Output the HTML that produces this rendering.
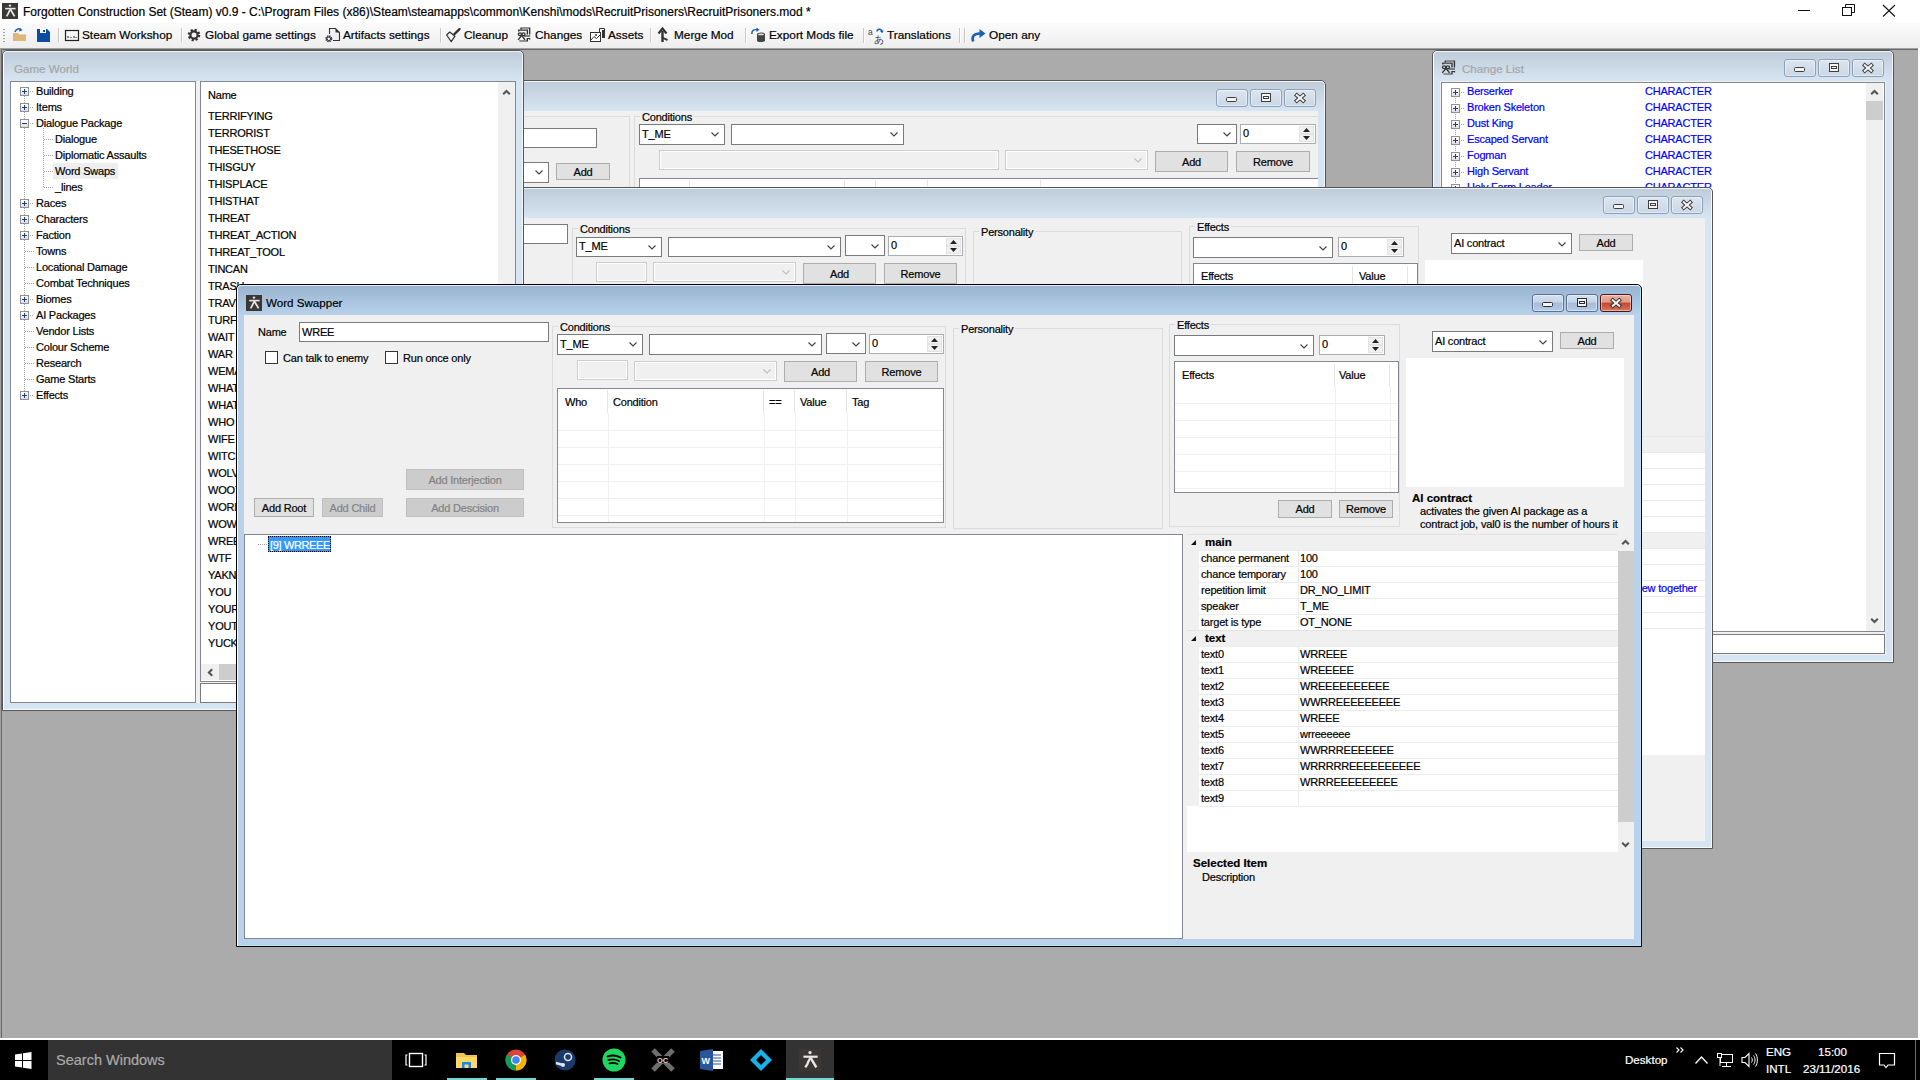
<!DOCTYPE html>
<html><head><meta charset="utf-8"><title>Forgotten Construction Set</title>
<style>
html,body{margin:0;padding:0;}
body{width:1920px;height:1080px;overflow:hidden;position:relative;background:#ababab;font-family:"Liberation Sans",sans-serif;font-size:11px;color:#000;}
.a{position:absolute;box-sizing:border-box;}
.t{position:absolute;white-space:nowrap;-webkit-text-stroke:0.2px currentColor;}
svg.a{overflow:visible;}
</style></head><body>
<div class="a" style="left:0px;top:0px;width:1920px;height:23px;background:#fff;"></div>
<div class="a" style="left:2px;top:3px;width:16px;height:16px;background:#3b3735;"></div>
<svg class="a" style="left:2px;top:3px;" width="16" height="16" viewBox="0 0 16 16"><circle cx="8" cy="2.6" r="1.2" fill="#e6e6e6"/><path d="M3.2,5.6 H13.6" stroke="#e6e6e6" stroke-width="1.6"/><path d="M8.2,6 L12.6,13.4" stroke="#e6e6e6" stroke-width="1.8"/><path d="M8.2,6.5 C7.4,8.5 6.6,9 6.2,10.8 L4.6,13.4" stroke="#e6e6e6" stroke-width="1.7" fill="none"/></svg>
<div class="t" style="left:23px;top:2.5px;line-height:18px;font-size:12px;">Forgotten Construction Set (Steam) v0.9 - C:\Program Files (x86)\Steam\steamapps\common\Kenshi\mods\RecruitPrisoners\RecruitPrisoners.mod *</div>
<div class="a" style="left:1798px;top:10px;width:12px;height:1px;background:#111;"></div>
<svg class="a" style="left:1842px;top:4px;" width="14" height="12" viewBox="0 0 14 12"><rect x="0.5" y="3.5" width="9" height="8" fill="none" stroke="#111"/><path d="M3.5,3.5 V0.5 H12.5 V8.5 H9.5" fill="none" stroke="#111"/></svg>
<svg class="a" style="left:1882px;top:4px;" width="14" height="13" viewBox="0 0 14 13"><path d="M1,1 L13,12.5 M13,1 L1,12.5" stroke="#111" stroke-width="1.1"/></svg>
<div class="a" style="left:0px;top:23px;width:1920px;height:25px;background:linear-gradient(#fbfbfb,#eeeeee);"></div>
<div class="a" style="left:3px;top:29px;width:2px;height:1px;background:#a0a0a0;"></div>
<div class="a" style="left:3px;top:32px;width:2px;height:1px;background:#a0a0a0;"></div>
<div class="a" style="left:3px;top:35px;width:2px;height:1px;background:#a0a0a0;"></div>
<div class="a" style="left:3px;top:38px;width:2px;height:1px;background:#a0a0a0;"></div>
<div class="a" style="left:3px;top:41px;width:2px;height:1px;background:#a0a0a0;"></div>
<svg class="a" style="left:12px;top:27px;" width="16" height="15" viewBox="0 0 16 15"><path d="M1,6 H6 L7,7.5 H14 V14 H1 Z" fill="#dcb67a"/><path d="M3,5 C4,1.5 8,1 9,3" stroke="#1a5fb4" stroke-width="1.5" fill="none"/><path d="M8,1 L10.5,3.5 L7,4.5 Z" fill="#1a5fb4"/></svg>
<svg class="a" style="left:37px;top:29px;" width="13" height="13" viewBox="0 0 13 13"><path d="M0,0 H10 L13,3 V13 H0 Z" fill="#0a4da3"/><rect x="3" y="0" width="6" height="4" fill="#fff"/><rect x="6" y="1" width="2" height="2" fill="#0a4da3"/></svg>
<div class="a" style="left:58px;top:28px;width:1px;height:15px;background:#c8c8c8;"></div>
<div class="a" style="left:59px;top:28px;width:1px;height:15px;background:#fff;"></div>
<svg class="a" style="left:65px;top:30px;" width="14" height="11" viewBox="0 0 14 11"><rect x="0.5" y="0.5" width="13" height="10" fill="none" stroke="#222" stroke-width="1.2"/><path d="M3,8 V6 M6,8 V7 M9,8 V6 M11,8 V7" stroke="#222"/></svg>
<div class="t" style="left:82px;top:26.0px;line-height:18px;font-size:11.8px;">Steam Workshop</div>
<div class="a" style="left:181px;top:28px;width:1px;height:15px;background:#c8c8c8;"></div>
<div class="a" style="left:182px;top:28px;width:1px;height:15px;background:#fff;"></div>
<svg class="a" style="left:187px;top:28px;" width="14" height="14" viewBox="0 0 14 14"><circle cx="7" cy="7" r="4.8" fill="none" stroke="#333" stroke-width="3" stroke-dasharray="2 1.77"/><circle cx="7" cy="7" r="3.6" fill="none" stroke="#333" stroke-width="2.2"/></svg>
<div class="t" style="left:205px;top:26.0px;line-height:18px;font-size:11.8px;">Global game settings</div>
<svg class="a" style="left:325px;top:28px;" width="15" height="15" viewBox="0 0 15 15"><path d="M4.5,6 V0.5 H10.5 L14.5,4.5 V12.5 H8" fill="#f0f0f4" stroke="#333" stroke-width="1.1"/><path d="M10.5,0.5 L14.5,4.5 H10.5 Z" fill="#333"/><circle cx="3.8" cy="10.8" r="2.6" fill="none" stroke="#333" stroke-width="1.8" stroke-dasharray="1.3 0.75"/><circle cx="3.8" cy="10.8" r="1.8" fill="none" stroke="#333" stroke-width="1"/></svg>
<div class="t" style="left:343px;top:26.0px;line-height:18px;font-size:11.8px;">Artifacts settings</div>
<div class="a" style="left:440px;top:28px;width:1px;height:15px;background:#c8c8c8;"></div>
<div class="a" style="left:441px;top:28px;width:1px;height:15px;background:#fff;"></div>
<svg class="a" style="left:446px;top:28px;" width="15" height="15" viewBox="0 0 15 15"><path d="M13.5,1.2 L8,6.5" stroke="#333" stroke-width="2.4" stroke-linecap="round"/><path d="M0.6,7 L3.8,4 L9,8.2 L5.2,13.6 Z" fill="#f4f4f4" stroke="#333" stroke-width="1.2" stroke-linejoin="round"/></svg>
<div class="t" style="left:464px;top:26.0px;line-height:18px;font-size:11.8px;">Cleanup</div>
<svg class="a" style="left:517px;top:27px;" width="16" height="16" viewBox="0 0 16 16"><g transform="scale(1.15,1)" fill="none" stroke="#333" stroke-width="1.2"><path d="M3.5,2.5 V1 H11 V7.5"/><path d="M1.5,4.5 V3.2 H9 V7.5"/><path d="M6,9 H11.5"/><path d="M2,14 H9 V11.5 L11,11.5 V12.5"/><circle cx="2.6" cy="7.2" r="1.4"/><circle cx="5.6" cy="7.2" r="1.4"/><path d="M4.1,8.3 L1,12.8 M4.1,8.3 L7,12.8"/></g></svg>
<div class="t" style="left:535px;top:26.0px;line-height:18px;font-size:11.8px;">Changes</div>
<svg class="a" style="left:590px;top:28px;" width="15" height="15" viewBox="0 0 15 15"><rect x="0.5" y="4.5" width="10" height="9" fill="#fff" stroke="#333"/><path d="M1,12 L4,8.5 L6.5,10.5 L10,7" fill="none" stroke="#333"/><circle cx="6" cy="7" r="1" fill="#333"/><path d="M9.5,4 V0.5 H14.5 V10" fill="none" stroke="#333"/><rect x="12" y="2" width="2" height="8" fill="#333"/></svg>
<div class="t" style="left:608px;top:26.0px;line-height:18px;font-size:11.8px;">Assets</div>
<div class="a" style="left:650px;top:28px;width:1px;height:15px;background:#c8c8c8;"></div>
<div class="a" style="left:651px;top:28px;width:1px;height:15px;background:#fff;"></div>
<svg class="a" style="left:658px;top:28px;" width="11" height="15" viewBox="0 0 11 15"><path d="M4.5,14 V3" stroke="#333" stroke-width="2.4" fill="none"/><path d="M0.5,5.5 L4.5,0.5 L8.5,5.5" stroke="#333" stroke-width="2.2" fill="none"/><path d="M4.5,9.5 C6,10.5 7,11 9.5,12" stroke="#333" stroke-width="2" fill="none"/></svg>
<div class="t" style="left:674px;top:26.0px;line-height:18px;font-size:11.8px;">Merge Mod</div>
<div class="a" style="left:745px;top:28px;width:1px;height:15px;background:#c8c8c8;"></div>
<div class="a" style="left:746px;top:28px;width:1px;height:15px;background:#fff;"></div>
<svg class="a" style="left:750px;top:27px;" width="16" height="16" viewBox="0 0 16 16"><path d="M1.8,7 C1.8,3 4,2.2 7.5,2.8" stroke="#1a5fb4" stroke-width="1.5" fill="none"/><path d="M6.5,0.5 L9.5,2.8 L6.5,5 Z" fill="#1a5fb4"/><path d="M7,7 V13.5 A4,1.6 0 0 0 15,13.5 V7 Z" fill="#444"/><ellipse cx="11" cy="7" rx="4" ry="1.6" fill="#444"/><ellipse cx="11" cy="7.4" rx="3" ry="0.9" fill="#e0e0e0"/></svg>
<div class="t" style="left:769px;top:26.0px;line-height:18px;font-size:11.8px;">Export Mods file</div>
<div class="a" style="left:863px;top:28px;width:1px;height:15px;background:#c8c8c8;"></div>
<div class="a" style="left:864px;top:28px;width:1px;height:15px;background:#fff;"></div>
<svg class="a" style="left:868px;top:27px;" width="16" height="16" viewBox="0 0 16 16"><text x="0" y="7.5" font-size="8.5" font-family="Liberation Sans" fill="#444">a</text><text x="5.5" y="15.5" font-size="9.5" font-family="Liberation Sans" fill="#444">&#x3042;</text><path d="M9,4.5 C9,1.5 13.5,1.5 14,4.5" stroke="#1a5fb4" stroke-width="1.4" fill="none"/><path d="M12,4 L14.2,6.3 L15.8,3.5 Z" fill="#1a5fb4"/></svg>
<div class="t" style="left:887px;top:26.0px;line-height:18px;font-size:11.8px;">Translations</div>
<div class="a" style="left:959px;top:28px;width:1px;height:15px;background:#c8c8c8;"></div>
<div class="a" style="left:960px;top:28px;width:1px;height:15px;background:#fff;"></div>
<div class="a" style="left:964px;top:28px;width:1px;height:15px;background:#c8c8c8;"></div>
<div class="a" style="left:965px;top:28px;width:1px;height:15px;background:#fff;"></div>
<svg class="a" style="left:971px;top:28px;" width="16" height="15" viewBox="0 0 16 15"><path d="M2.2,13.5 C0.5,9 2.5,5.5 9,5.5" stroke="#1a5fb4" stroke-width="2.6" fill="none"/><path d="M8.5,1 L14.5,5.5 L8.5,10 Z" fill="#1a5fb4"/></svg>
<div class="t" style="left:989px;top:26.0px;line-height:18px;font-size:11.8px;">Open any</div>
<div class="a" style="left:0px;top:48px;width:1920px;height:992px;background:#ababab;"></div>
<div class="a" style="left:0px;top:48px;width:1920px;height:1px;background:#a0a0a0;"></div>
<div class="a" style="left:0px;top:49px;width:1920px;height:1px;background:#696969;"></div>
<div class="a" style="left:0px;top:48px;width:1px;height:992px;background:#a0a0a0;"></div>
<div class="a" style="left:1px;top:49px;width:1px;height:989px;background:#696969;"></div>
<div class="a" style="left:0px;top:1038px;width:1920px;height:2px;background:#fff;"></div>
<div class="a" style="left:1918px;top:48px;width:2px;height:992px;background:#fff;"></div>
<div class="a" style="left:236px;top:80px;width:1090px;height:621px;background:#d7e4f2;border:1px solid #555555;border-radius:5px 5px 0 0;box-shadow:inset 1px 1px 0 #fff,inset -1px -1px 0 #f4f8fc;"></div>
<div class="a" style="left:238px;top:81px;width:1086px;height:30px;background:linear-gradient(#bfcddb,#d7e4f2);border-radius:4px 4px 0 0;border-top:1px solid rgba(255,255,255,.6);"></div>
<div class="a" style="left:244px;top:111px;width:1074px;height:582px;background:#f0f0f0;"></div>
<div class="a" style="left:1216px;top:89px;width:32px;height:18px;background:linear-gradient(#dbe5f0,#cbd7e5);border:1px solid #8d9fb9;border-radius:3px;box-shadow:inset 0 0 0 1px rgba(255,255,255,.45);"></div>
<svg class="a" style="left:1225px;top:97px;" width="12" height="6" viewBox="0 0 12 6"><rect x="1.5" y="0.5" width="10" height="4" rx="1" fill="#f4f4f4" stroke="#3e3e3e" stroke-width="1"/></svg>
<div class="a" style="left:1250px;top:89px;width:32px;height:18px;background:linear-gradient(#dbe5f0,#cbd7e5);border:1px solid #8d9fb9;border-radius:3px;box-shadow:inset 0 0 0 1px rgba(255,255,255,.45);"></div>
<svg class="a" style="left:1260px;top:92px;" width="12" height="11" viewBox="0 0 12 11"><rect x="1.5" y="1.5" width="9" height="8" fill="#f4f4f4" stroke="#3e3e3e" stroke-width="1"/><rect x="3.5" y="4.5" width="5" height="2" fill="#f4f4f4" stroke="#3e3e3e" stroke-width="1"/></svg>
<div class="a" style="left:1284px;top:89px;width:32px;height:18px;background:linear-gradient(#dbe5f0,#cbd7e5);border:1px solid #8d9fb9;border-radius:3px;box-shadow:inset 0 0 0 1px rgba(255,255,255,.45);"></div>
<svg class="a" style="left:1293px;top:92px;" width="14" height="12" viewBox="0 0 14 12"><path d="M3.8,3.2 L10.2,8.8 M10.2,3.2 L3.8,8.8" stroke="#3e3e3e" stroke-width="4" stroke-linecap="square"/><path d="M3.8,3.2 L10.2,8.8 M10.2,3.2 L3.8,8.8" stroke="#f6f6f6" stroke-width="2" stroke-linecap="square"/></svg>
<div class="a" style="left:244px;top:111px;width:1074px;height:582px;overflow:hidden;">
<div class="a" style="left:56px;top:5px;width:330px;height:284px;border:1px solid #dcdcdc;"></div>
<div class="a" style="left:156px;top:17px;width:197px;height:20px;background:#fff;border:1px solid #7a7a7a;"></div>
<div class="a" style="left:156px;top:51px;width:149px;height:21px;background:#fff;border:1px solid #7a7a7a;"></div>
<svg class="a" style="left:291px;top:59px;" width="8" height="5" viewBox="0 0 8 5"><polyline points="0.5,0.5 4,4 7.5,0.5" fill="none" stroke="#404040" stroke-width="1.1"/></svg>
<div class="a" style="left:312px;top:52px;width:54px;height:17px;background:#e1e1e1;border:1px solid #adadad;"></div>
<div class="t" style="left:312px;top:52.5px;width:54px;text-align:center;line-height:16px;font-size:11px;letter-spacing:-0.2px;">Add</div>
<div class="a" style="left:390px;top:5px;width:706px;height:284px;border:1px solid #dcdcdc;"></div>
<div class="t" style="left:396px;top:-2px;line-height:16px;padding:0 2px;background:#f0f0f0;letter-spacing:-0.2px;">Conditions</div>
<div class="a" style="left:395px;top:13px;width:86px;height:21px;background:#fff;border:1px solid #7a7a7a;"></div>
<svg class="a" style="left:467px;top:21px;" width="8" height="5" viewBox="0 0 8 5"><polyline points="0.5,0.5 4,4 7.5,0.5" fill="none" stroke="#404040" stroke-width="1.1"/></svg>
<div class="t" style="left:398px;top:14.5px;line-height:16px;font-size:11px;letter-spacing:-0.2px;">T_ME</div>
<div class="a" style="left:487px;top:13px;width:173px;height:21px;background:#fff;border:1px solid #7a7a7a;"></div>
<svg class="a" style="left:646px;top:21px;" width="8" height="5" viewBox="0 0 8 5"><polyline points="0.5,0.5 4,4 7.5,0.5" fill="none" stroke="#404040" stroke-width="1.1"/></svg>
<div class="a" style="left:953px;top:13px;width:40px;height:20px;background:#fff;border:1px solid #7a7a7a;"></div>
<svg class="a" style="left:979px;top:21px;" width="8" height="5" viewBox="0 0 8 5"><polyline points="0.5,0.5 4,4 7.5,0.5" fill="none" stroke="#404040" stroke-width="1.1"/></svg>
<div class="a" style="left:996px;top:13px;width:76px;height:20px;background:#fff;border:1px solid #abadb3;"></div>
<div class="a" style="left:1055px;top:15px;width:15px;height:8px;background:#f0f0f0;border:1px solid #e3e3e3;"></div>
<div class="a" style="left:1055px;top:23px;width:15px;height:8px;background:#f0f0f0;border:1px solid #e3e3e3;"></div>
<svg class="a" style="left:1059px;top:17px;" width="7" height="4" viewBox="0 0 7 4"><polygon points="3.5,0 7,4 0,4" fill="#222"/></svg>
<svg class="a" style="left:1059px;top:25px;" width="7" height="4" viewBox="0 0 7 4"><polygon points="0,0 7,0 3.5,4" fill="#222"/></svg>
<div class="t" style="left:999px;top:13.5px;line-height:16px;font-size:11px;letter-spacing:-0.2px;">0</div>
<div class="a" style="left:415px;top:39px;width:340px;height:20px;background:#f0f0f0;border:1px solid #cccccc;box-shadow:inset 0 0 0 1px #fff;"></div>
<div class="a" style="left:761px;top:39px;width:143px;height:20px;background:#f0f0f0;border:1px solid #cccccc;box-shadow:inset 0 0 0 1px #fff;"></div>
<svg class="a" style="left:890px;top:47px;" width="8" height="5" viewBox="0 0 8 5"><polyline points="0.5,0.5 4,4 7.5,0.5" fill="none" stroke="#bfbfbf" stroke-width="1.1"/></svg>
<div class="a" style="left:911px;top:40px;width:73px;height:21px;background:#e1e1e1;border:1px solid #adadad;"></div>
<div class="t" style="left:911px;top:42.5px;width:73px;text-align:center;line-height:16px;font-size:11px;letter-spacing:-0.2px;">Add</div>
<div class="a" style="left:992px;top:40px;width:74px;height:21px;background:#e1e1e1;border:1px solid #adadad;"></div>
<div class="t" style="left:992px;top:42.5px;width:74px;text-align:center;line-height:16px;font-size:11px;letter-spacing:-0.2px;">Remove</div>
<div class="a" style="left:395px;top:67px;width:701px;height:122px;background:#fff;border:1px solid #828790;"></div>
<div class="a" style="left:445px;top:69px;width:1px;height:20px;background:#e5e5e5;"></div>
<div class="a" style="left:600px;top:69px;width:1px;height:20px;background:#e5e5e5;"></div>
<div class="a" style="left:631px;top:69px;width:1px;height:20px;background:#e5e5e5;"></div>
<div class="a" style="left:683px;top:69px;width:1px;height:20px;background:#e5e5e5;"></div>
<div class="a" style="left:796px;top:69px;width:1px;height:20px;background:#e5e5e5;"></div>
</div>
<div class="a" style="left:1432px;top:50px;width:462px;height:613px;background:#d7e4f2;border:1px solid #555555;border-radius:5px 5px 0 0;box-shadow:inset 1px 1px 0 #fff,inset -1px -1px 0 #f4f8fc;"></div>
<div class="a" style="left:1434px;top:51px;width:458px;height:30px;background:linear-gradient(#bfcddb,#d7e4f2);border-radius:4px 4px 0 0;border-top:1px solid rgba(255,255,255,.6);"></div>
<div class="a" style="left:1440px;top:81px;width:446px;height:574px;background:#f0f0f0;"></div>
<div class="a" style="left:1784px;top:59px;width:32px;height:18px;background:linear-gradient(#dbe5f0,#cbd7e5);border:1px solid #8d9fb9;border-radius:3px;box-shadow:inset 0 0 0 1px rgba(255,255,255,.45);"></div>
<svg class="a" style="left:1793px;top:67px;" width="12" height="6" viewBox="0 0 12 6"><rect x="1.5" y="0.5" width="10" height="4" rx="1" fill="#f4f4f4" stroke="#3e3e3e" stroke-width="1"/></svg>
<div class="a" style="left:1818px;top:59px;width:32px;height:18px;background:linear-gradient(#dbe5f0,#cbd7e5);border:1px solid #8d9fb9;border-radius:3px;box-shadow:inset 0 0 0 1px rgba(255,255,255,.45);"></div>
<svg class="a" style="left:1828px;top:62px;" width="12" height="11" viewBox="0 0 12 11"><rect x="1.5" y="1.5" width="9" height="8" fill="#f4f4f4" stroke="#3e3e3e" stroke-width="1"/><rect x="3.5" y="4.5" width="5" height="2" fill="#f4f4f4" stroke="#3e3e3e" stroke-width="1"/></svg>
<div class="a" style="left:1852px;top:59px;width:32px;height:18px;background:linear-gradient(#dbe5f0,#cbd7e5);border:1px solid #8d9fb9;border-radius:3px;box-shadow:inset 0 0 0 1px rgba(255,255,255,.45);"></div>
<svg class="a" style="left:1861px;top:62px;" width="14" height="12" viewBox="0 0 14 12"><path d="M3.8,3.2 L10.2,8.8 M10.2,3.2 L3.8,8.8" stroke="#3e3e3e" stroke-width="4" stroke-linecap="square"/><path d="M3.8,3.2 L10.2,8.8 M10.2,3.2 L3.8,8.8" stroke="#f6f6f6" stroke-width="2" stroke-linecap="square"/></svg>
<div class="t" style="left:1462px;top:60.0px;line-height:18px;font-size:11.6px;color:#a5a5a5;">Change List</div>
<svg class="a" style="left:1441px;top:60px;" width="16" height="16" viewBox="0 0 16 16"><g style="filter:drop-shadow(0 0 0.6px #fff)" transform="scale(1.22,1)"><g fill="none" stroke="#333" stroke-width="1.2"><path d="M3.5,2.5 V1 H11 V7.5"/><path d="M1.5,4.5 V3.2 H9 V7.5"/><path d="M6,9 H11.5"/><path d="M2,14 H9 V11.5 L11,11.5 V12.5"/><circle cx="2.6" cy="7.2" r="1.4"/><circle cx="5.6" cy="7.2" r="1.4"/><path d="M4.1,8.3 L1,12.8 M4.1,8.3 L7,12.8"/></g></g></svg>
<div class="a" style="left:1440px;top:81px;width:446px;height:574px;overflow:hidden;">
<div class="a" style="left:1px;top:1px;width:444px;height:550px;background:#fff;border:1px solid #828790;"></div>
<div class="a" style="left:426px;top:2px;width:17px;height:548px;background:#f0f0f0;"></div>
<svg class="a" style="left:430px;top:8px;" width="9" height="6" viewBox="0 0 9 6"><polyline points="1.2,5.2 4.5,1.9 7.8,5.2" fill="none" stroke="#555" stroke-width="2.1"/></svg>
<div class="a" style="left:426px;top:20px;width:17px;height:19px;background:#cdcdcd;"></div>
<svg class="a" style="left:430px;top:537px;" width="9" height="6" viewBox="0 0 9 6"><polyline points="1.2,0.8 4.5,4.1 7.8,0.8" fill="none" stroke="#555" stroke-width="2.1"/></svg>
<div class="a" style="left:15px;top:15px;width:1px;height:536px;background:repeating-linear-gradient(180deg,#a0a0a0 0 1px,transparent 1px 2px);"></div>
<div class="a" style="left:11px;top:7px;width:9px;height:9px;border:1px solid #919191;background:linear-gradient(#fff,#dedede);"></div>
<div class="a" style="left:13px;top:11px;width:5px;height:1px;background:#1f3c88;"></div>
<div class="a" style="left:15px;top:9px;width:1px;height:5px;background:#1f3c88;"></div>
<div class="a" style="left:21px;top:11px;width:4px;height:1px;background:repeating-linear-gradient(90deg,#a0a0a0 0 1px,transparent 1px 2px);"></div>
<div class="t" style="left:27px;top:1.5px;line-height:16px;font-size:11px;color:#0000ff;letter-spacing:-0.2px;">Berserker</div>
<div class="t" style="left:205px;top:1.5px;line-height:16px;font-size:11px;color:#0000ff;letter-spacing:-0.2px;">CHARACTER</div>
<div class="a" style="left:11px;top:23px;width:9px;height:9px;border:1px solid #919191;background:linear-gradient(#fff,#dedede);"></div>
<div class="a" style="left:13px;top:27px;width:5px;height:1px;background:#1f3c88;"></div>
<div class="a" style="left:15px;top:25px;width:1px;height:5px;background:#1f3c88;"></div>
<div class="a" style="left:21px;top:27px;width:4px;height:1px;background:repeating-linear-gradient(90deg,#a0a0a0 0 1px,transparent 1px 2px);"></div>
<div class="t" style="left:27px;top:17.5px;line-height:16px;font-size:11px;color:#0000ff;letter-spacing:-0.2px;">Broken Skeleton</div>
<div class="t" style="left:205px;top:17.5px;line-height:16px;font-size:11px;color:#0000ff;letter-spacing:-0.2px;">CHARACTER</div>
<div class="a" style="left:11px;top:39px;width:9px;height:9px;border:1px solid #919191;background:linear-gradient(#fff,#dedede);"></div>
<div class="a" style="left:13px;top:43px;width:5px;height:1px;background:#1f3c88;"></div>
<div class="a" style="left:15px;top:41px;width:1px;height:5px;background:#1f3c88;"></div>
<div class="a" style="left:21px;top:43px;width:4px;height:1px;background:repeating-linear-gradient(90deg,#a0a0a0 0 1px,transparent 1px 2px);"></div>
<div class="t" style="left:27px;top:33.5px;line-height:16px;font-size:11px;color:#0000ff;letter-spacing:-0.2px;">Dust King</div>
<div class="t" style="left:205px;top:33.5px;line-height:16px;font-size:11px;color:#0000ff;letter-spacing:-0.2px;">CHARACTER</div>
<div class="a" style="left:11px;top:55px;width:9px;height:9px;border:1px solid #919191;background:linear-gradient(#fff,#dedede);"></div>
<div class="a" style="left:13px;top:59px;width:5px;height:1px;background:#1f3c88;"></div>
<div class="a" style="left:15px;top:57px;width:1px;height:5px;background:#1f3c88;"></div>
<div class="a" style="left:21px;top:59px;width:4px;height:1px;background:repeating-linear-gradient(90deg,#a0a0a0 0 1px,transparent 1px 2px);"></div>
<div class="t" style="left:27px;top:49.5px;line-height:16px;font-size:11px;color:#0000ff;letter-spacing:-0.2px;">Escaped Servant</div>
<div class="t" style="left:205px;top:49.5px;line-height:16px;font-size:11px;color:#0000ff;letter-spacing:-0.2px;">CHARACTER</div>
<div class="a" style="left:11px;top:71px;width:9px;height:9px;border:1px solid #919191;background:linear-gradient(#fff,#dedede);"></div>
<div class="a" style="left:13px;top:75px;width:5px;height:1px;background:#1f3c88;"></div>
<div class="a" style="left:15px;top:73px;width:1px;height:5px;background:#1f3c88;"></div>
<div class="a" style="left:21px;top:75px;width:4px;height:1px;background:repeating-linear-gradient(90deg,#a0a0a0 0 1px,transparent 1px 2px);"></div>
<div class="t" style="left:27px;top:65.5px;line-height:16px;font-size:11px;color:#0000ff;letter-spacing:-0.2px;">Fogman</div>
<div class="t" style="left:205px;top:65.5px;line-height:16px;font-size:11px;color:#0000ff;letter-spacing:-0.2px;">CHARACTER</div>
<div class="a" style="left:11px;top:87px;width:9px;height:9px;border:1px solid #919191;background:linear-gradient(#fff,#dedede);"></div>
<div class="a" style="left:13px;top:91px;width:5px;height:1px;background:#1f3c88;"></div>
<div class="a" style="left:15px;top:89px;width:1px;height:5px;background:#1f3c88;"></div>
<div class="a" style="left:21px;top:91px;width:4px;height:1px;background:repeating-linear-gradient(90deg,#a0a0a0 0 1px,transparent 1px 2px);"></div>
<div class="t" style="left:27px;top:81.5px;line-height:16px;font-size:11px;color:#0000ff;letter-spacing:-0.2px;">High Servant</div>
<div class="t" style="left:205px;top:81.5px;line-height:16px;font-size:11px;color:#0000ff;letter-spacing:-0.2px;">CHARACTER</div>
<div class="a" style="left:11px;top:103px;width:9px;height:9px;border:1px solid #919191;background:linear-gradient(#fff,#dedede);"></div>
<div class="a" style="left:13px;top:107px;width:5px;height:1px;background:#1f3c88;"></div>
<div class="a" style="left:15px;top:105px;width:1px;height:5px;background:#1f3c88;"></div>
<div class="a" style="left:21px;top:107px;width:4px;height:1px;background:repeating-linear-gradient(90deg,#a0a0a0 0 1px,transparent 1px 2px);"></div>
<div class="t" style="left:27px;top:97.5px;line-height:16px;font-size:11px;color:#0000ff;letter-spacing:-0.2px;">Holy Farm Leader</div>
<div class="t" style="left:205px;top:97.5px;line-height:16px;font-size:11px;color:#0000ff;letter-spacing:-0.2px;">CHARACTER</div>
<div class="a" style="left:11px;top:119px;width:9px;height:9px;border:1px solid #919191;background:linear-gradient(#fff,#dedede);"></div>
<div class="a" style="left:13px;top:123px;width:5px;height:1px;background:#1f3c88;"></div>
<div class="a" style="left:15px;top:121px;width:1px;height:5px;background:#1f3c88;"></div>
<div class="a" style="left:21px;top:123px;width:4px;height:1px;background:repeating-linear-gradient(90deg,#a0a0a0 0 1px,transparent 1px 2px);"></div>
<div class="t" style="left:27px;top:113.5px;line-height:16px;font-size:11px;color:#0000ff;letter-spacing:-0.2px;">Holy Sword</div>
<div class="t" style="left:205px;top:113.5px;line-height:16px;font-size:11px;color:#0000ff;letter-spacing:-0.2px;">CHARACTER</div>
<div class="a" style="left:11px;top:135px;width:9px;height:9px;border:1px solid #919191;background:linear-gradient(#fff,#dedede);"></div>
<div class="a" style="left:13px;top:139px;width:5px;height:1px;background:#1f3c88;"></div>
<div class="a" style="left:15px;top:137px;width:1px;height:5px;background:#1f3c88;"></div>
<div class="a" style="left:21px;top:139px;width:4px;height:1px;background:repeating-linear-gradient(90deg,#a0a0a0 0 1px,transparent 1px 2px);"></div>
<div class="t" style="left:27px;top:129.5px;line-height:16px;font-size:11px;color:#0000ff;letter-spacing:-0.2px;">Iron Spider</div>
<div class="t" style="left:205px;top:129.5px;line-height:16px;font-size:11px;color:#0000ff;letter-spacing:-0.2px;">CHARACTER</div>
<div class="a" style="left:11px;top:151px;width:9px;height:9px;border:1px solid #919191;background:linear-gradient(#fff,#dedede);"></div>
<div class="a" style="left:13px;top:155px;width:5px;height:1px;background:#1f3c88;"></div>
<div class="a" style="left:15px;top:153px;width:1px;height:5px;background:#1f3c88;"></div>
<div class="a" style="left:21px;top:155px;width:4px;height:1px;background:repeating-linear-gradient(90deg,#a0a0a0 0 1px,transparent 1px 2px);"></div>
<div class="t" style="left:27px;top:145.5px;line-height:16px;font-size:11px;color:#0000ff;letter-spacing:-0.2px;">Lone Servant</div>
<div class="t" style="left:205px;top:145.5px;line-height:16px;font-size:11px;color:#0000ff;letter-spacing:-0.2px;">CHARACTER</div>
<div class="a" style="left:1px;top:553px;width:444px;height:20px;background:#fff;border:1px solid #7a7a7a;"></div>
</div>
<div class="a" style="left:256px;top:187px;width:1457px;height:662px;background:#d7e4f2;border:1px solid #555555;border-radius:5px 5px 0 0;box-shadow:inset 1px 1px 0 #fff,inset -1px -1px 0 #f4f8fc;"></div>
<div class="a" style="left:258px;top:188px;width:1453px;height:30px;background:linear-gradient(#bfcddb,#d7e4f2);border-radius:4px 4px 0 0;border-top:1px solid rgba(255,255,255,.6);"></div>
<div class="a" style="left:264px;top:218px;width:1441px;height:623px;background:#f0f0f0;"></div>
<div class="a" style="left:1603px;top:196px;width:32px;height:18px;background:linear-gradient(#dbe5f0,#cbd7e5);border:1px solid #8d9fb9;border-radius:3px;box-shadow:inset 0 0 0 1px rgba(255,255,255,.45);"></div>
<svg class="a" style="left:1612px;top:204px;" width="12" height="6" viewBox="0 0 12 6"><rect x="1.5" y="0.5" width="10" height="4" rx="1" fill="#f4f4f4" stroke="#3e3e3e" stroke-width="1"/></svg>
<div class="a" style="left:1637px;top:196px;width:32px;height:18px;background:linear-gradient(#dbe5f0,#cbd7e5);border:1px solid #8d9fb9;border-radius:3px;box-shadow:inset 0 0 0 1px rgba(255,255,255,.45);"></div>
<svg class="a" style="left:1647px;top:199px;" width="12" height="11" viewBox="0 0 12 11"><rect x="1.5" y="1.5" width="9" height="8" fill="#f4f4f4" stroke="#3e3e3e" stroke-width="1"/><rect x="3.5" y="4.5" width="5" height="2" fill="#f4f4f4" stroke="#3e3e3e" stroke-width="1"/></svg>
<div class="a" style="left:1671px;top:196px;width:32px;height:18px;background:linear-gradient(#dbe5f0,#cbd7e5);border:1px solid #8d9fb9;border-radius:3px;box-shadow:inset 0 0 0 1px rgba(255,255,255,.45);"></div>
<svg class="a" style="left:1680px;top:199px;" width="14" height="12" viewBox="0 0 14 12"><path d="M3.8,3.2 L10.2,8.8 M10.2,3.2 L3.8,8.8" stroke="#3e3e3e" stroke-width="4" stroke-linecap="square"/><path d="M3.8,3.2 L10.2,8.8 M10.2,3.2 L3.8,8.8" stroke="#f6f6f6" stroke-width="2" stroke-linecap="square"/></svg>
<div class="a" style="left:264px;top:218px;width:1441px;height:623px;overflow:hidden;">
<div class="a" style="left:136px;top:6px;width:168px;height:20px;background:#fff;border:1px solid #7a7a7a;"></div>
<div class="a" style="left:308px;top:10px;width:394px;height:202px;border:1px solid #dcdcdc;"></div>
<div class="t" style="left:314px;top:3px;line-height:16px;padding:0 2px;background:#f0f0f0;letter-spacing:-0.2px;">Conditions</div>
<div class="a" style="left:312px;top:19px;width:86px;height:20px;background:#fff;border:1px solid #7a7a7a;"></div>
<svg class="a" style="left:384px;top:27px;" width="8" height="5" viewBox="0 0 8 5"><polyline points="0.5,0.5 4,4 7.5,0.5" fill="none" stroke="#404040" stroke-width="1.1"/></svg>
<div class="t" style="left:315px;top:20.0px;line-height:16px;font-size:11px;letter-spacing:-0.2px;">T_ME</div>
<div class="a" style="left:404px;top:19px;width:173px;height:20px;background:#fff;border:1px solid #7a7a7a;"></div>
<svg class="a" style="left:563px;top:27px;" width="8" height="5" viewBox="0 0 8 5"><polyline points="0.5,0.5 4,4 7.5,0.5" fill="none" stroke="#404040" stroke-width="1.1"/></svg>
<div class="a" style="left:581px;top:17px;width:40px;height:21px;background:#fff;border:1px solid #7a7a7a;"></div>
<svg class="a" style="left:607px;top:26px;" width="8" height="5" viewBox="0 0 8 5"><polyline points="0.5,0.5 4,4 7.5,0.5" fill="none" stroke="#404040" stroke-width="1.1"/></svg>
<div class="a" style="left:624px;top:18px;width:75px;height:20px;background:#fff;border:1px solid #abadb3;"></div>
<div class="a" style="left:682px;top:20px;width:15px;height:8px;background:#f0f0f0;border:1px solid #e3e3e3;"></div>
<div class="a" style="left:682px;top:28px;width:15px;height:8px;background:#f0f0f0;border:1px solid #e3e3e3;"></div>
<svg class="a" style="left:686px;top:22px;" width="7" height="4" viewBox="0 0 7 4"><polygon points="3.5,0 7,4 0,4" fill="#222"/></svg>
<svg class="a" style="left:686px;top:30px;" width="7" height="4" viewBox="0 0 7 4"><polygon points="0,0 7,0 3.5,4" fill="#222"/></svg>
<div class="t" style="left:627px;top:18.5px;line-height:16px;font-size:11px;letter-spacing:-0.2px;">0</div>
<div class="a" style="left:332px;top:44px;width:51px;height:20px;background:#f0f0f0;border:1px solid #cccccc;box-shadow:inset 0 0 0 1px #fff;"></div>
<div class="a" style="left:389px;top:44px;width:143px;height:20px;background:#f0f0f0;border:1px solid #cccccc;box-shadow:inset 0 0 0 1px #fff;"></div>
<svg class="a" style="left:518px;top:52px;" width="8" height="5" viewBox="0 0 8 5"><polyline points="0.5,0.5 4,4 7.5,0.5" fill="none" stroke="#bfbfbf" stroke-width="1.1"/></svg>
<div class="a" style="left:539px;top:45px;width:73px;height:21px;background:#e1e1e1;border:1px solid #adadad;"></div>
<div class="t" style="left:539px;top:47.5px;width:73px;text-align:center;line-height:16px;font-size:11px;letter-spacing:-0.2px;">Add</div>
<div class="a" style="left:620px;top:45px;width:73px;height:21px;background:#e1e1e1;border:1px solid #adadad;"></div>
<div class="t" style="left:620px;top:47.5px;width:73px;text-align:center;line-height:16px;font-size:11px;letter-spacing:-0.2px;">Remove</div>
<div class="a" style="left:709px;top:13px;width:209px;height:199px;border:1px solid #dcdcdc;"></div>
<div class="t" style="left:715px;top:6px;line-height:16px;padding:0 2px;background:#f0f0f0;letter-spacing:-0.2px;">Personality</div>
<div class="a" style="left:925px;top:8px;width:230px;height:204px;border:1px solid #dcdcdc;"></div>
<div class="t" style="left:931px;top:1px;line-height:16px;padding:0 2px;background:#f0f0f0;letter-spacing:-0.2px;">Effects</div>
<div class="a" style="left:929px;top:19px;width:140px;height:21px;background:#fff;border:1px solid #7a7a7a;"></div>
<svg class="a" style="left:1055px;top:28px;" width="8" height="5" viewBox="0 0 8 5"><polyline points="0.5,0.5 4,4 7.5,0.5" fill="none" stroke="#404040" stroke-width="1.1"/></svg>
<div class="a" style="left:1074px;top:19px;width:66px;height:20px;background:#fff;border:1px solid #abadb3;"></div>
<div class="a" style="left:1123px;top:21px;width:15px;height:8px;background:#f0f0f0;border:1px solid #e3e3e3;"></div>
<div class="a" style="left:1123px;top:29px;width:15px;height:8px;background:#f0f0f0;border:1px solid #e3e3e3;"></div>
<svg class="a" style="left:1127px;top:23px;" width="7" height="4" viewBox="0 0 7 4"><polygon points="3.5,0 7,4 0,4" fill="#222"/></svg>
<svg class="a" style="left:1127px;top:31px;" width="7" height="4" viewBox="0 0 7 4"><polygon points="0,0 7,0 3.5,4" fill="#222"/></svg>
<div class="t" style="left:1077px;top:19.5px;line-height:16px;font-size:11px;letter-spacing:-0.2px;">0</div>
<div class="a" style="left:929px;top:45px;width:225px;height:137px;background:#fff;border:1px solid #828790;"></div>
<div class="t" style="left:937px;top:50.0px;line-height:16px;font-size:11px;letter-spacing:-0.2px;">Effects</div>
<div class="t" style="left:1095px;top:50.0px;line-height:16px;font-size:11px;letter-spacing:-0.2px;">Value</div>
<div class="a" style="left:1088px;top:48px;width:1px;height:22px;background:#e5e5e5;"></div>
<div class="a" style="left:1143px;top:48px;width:1px;height:22px;background:#e5e5e5;"></div>
<div class="a" style="left:1187px;top:15px;width:121px;height:21px;background:#fff;border:1px solid #7a7a7a;"></div>
<svg class="a" style="left:1294px;top:24px;" width="8" height="5" viewBox="0 0 8 5"><polyline points="0.5,0.5 4,4 7.5,0.5" fill="none" stroke="#404040" stroke-width="1.1"/></svg>
<div class="t" style="left:1190px;top:16.5px;line-height:16px;font-size:11px;letter-spacing:-0.2px;">AI contract</div>
<div class="a" style="left:1315px;top:16px;width:54px;height:17px;background:#e1e1e1;border:1px solid #adadad;"></div>
<div class="t" style="left:1315px;top:16.5px;width:54px;text-align:center;line-height:16px;font-size:11px;letter-spacing:-0.2px;">Add</div>
<div class="a" style="left:1161px;top:42px;width:218px;height:140px;background:#fff;"></div>
<div class="a" style="left:942px;top:218px;width:499px;height:319px;background:#fff;"></div>
<div class="a" style="left:942px;top:218px;width:499px;height:16px;background:#f0f0f0;"></div>
<div class="a" style="left:942px;top:218px;width:499px;height:1px;background:#e8e8e8;"></div>
<div class="a" style="left:942px;top:234px;width:499px;height:1px;background:#e8e8e8;"></div>
<div class="a" style="left:942px;top:250px;width:499px;height:1px;background:#e8e8e8;"></div>
<div class="a" style="left:942px;top:266px;width:499px;height:1px;background:#e8e8e8;"></div>
<div class="a" style="left:942px;top:282px;width:499px;height:1px;background:#e8e8e8;"></div>
<div class="a" style="left:942px;top:298px;width:499px;height:1px;background:#e8e8e8;"></div>
<div class="a" style="left:942px;top:314px;width:499px;height:16px;background:#f0f0f0;"></div>
<div class="a" style="left:942px;top:314px;width:499px;height:1px;background:#e8e8e8;"></div>
<div class="a" style="left:942px;top:330px;width:499px;height:1px;background:#e8e8e8;"></div>
<div class="a" style="left:942px;top:346px;width:499px;height:1px;background:#e8e8e8;"></div>
<div class="a" style="left:942px;top:362px;width:499px;height:1px;background:#e8e8e8;"></div>
<div class="a" style="left:942px;top:378px;width:499px;height:1px;background:#e8e8e8;"></div>
<div class="a" style="left:942px;top:394px;width:499px;height:1px;background:#e8e8e8;"></div>
<div class="a" style="left:942px;top:410px;width:499px;height:1px;background:#e8e8e8;"></div>
<div class="t" style="left:1056px;top:362.0px;line-height:16px;font-size:11px;color:#0000ff;letter-spacing:-0.2px;left:auto;right:8px;">Arrange the recruits into a new crew together</div>
</div>
<div class="a" style="left:2px;top:50px;width:522px;height:661px;background:#d7e4f2;border:1px solid #555555;border-radius:5px 5px 0 0;box-shadow:inset 1px 1px 0 #fff,inset -1px -1px 0 #f4f8fc;"></div>
<div class="a" style="left:4px;top:51px;width:518px;height:30px;background:linear-gradient(#bfcddb,#d7e4f2);border-radius:4px 4px 0 0;border-top:1px solid rgba(255,255,255,.6);"></div>
<div class="a" style="left:10px;top:81px;width:506px;height:622px;background:#f0f0f0;"></div>
<div class="t" style="left:14px;top:60.0px;line-height:18px;font-size:11.6px;color:#a5a5a5;">Game World</div>
<div class="a" style="left:10px;top:81px;width:506px;height:622px;overflow:hidden;">
<div class="a" style="left:0px;top:0px;width:186px;height:622px;background:#fff;border:1px solid #828790;"></div>
<div class="a" style="left:14px;top:15px;width:1px;height:295px;background:repeating-linear-gradient(180deg,#a0a0a0 0 1px,transparent 1px 2px);"></div>
<div class="a" style="left:33px;top:47px;width:1px;height:59px;background:repeating-linear-gradient(180deg,#a0a0a0 0 1px,transparent 1px 2px);"></div>
<div class="a" style="left:10px;top:6px;width:9px;height:9px;border:1px solid #919191;background:linear-gradient(#fff,#dedede);"></div>
<div class="a" style="left:12px;top:10px;width:5px;height:1px;background:#1f3c88;"></div>
<div class="a" style="left:14px;top:8px;width:1px;height:5px;background:#1f3c88;"></div>
<div class="a" style="left:20px;top:10px;width:4px;height:1px;background:repeating-linear-gradient(90deg,#a0a0a0 0 1px,transparent 1px 2px);"></div>
<div class="t" style="left:26px;top:2.0px;line-height:16px;font-size:11px;letter-spacing:-0.2px;">Building</div>
<div class="a" style="left:10px;top:22px;width:9px;height:9px;border:1px solid #919191;background:linear-gradient(#fff,#dedede);"></div>
<div class="a" style="left:12px;top:26px;width:5px;height:1px;background:#1f3c88;"></div>
<div class="a" style="left:14px;top:24px;width:1px;height:5px;background:#1f3c88;"></div>
<div class="a" style="left:20px;top:26px;width:4px;height:1px;background:repeating-linear-gradient(90deg,#a0a0a0 0 1px,transparent 1px 2px);"></div>
<div class="t" style="left:26px;top:18.0px;line-height:16px;font-size:11px;letter-spacing:-0.2px;">Items</div>
<div class="a" style="left:10px;top:38px;width:9px;height:9px;border:1px solid #919191;background:linear-gradient(#fff,#dedede);"></div>
<div class="a" style="left:12px;top:42px;width:5px;height:1px;background:#1f3c88;"></div>
<div class="a" style="left:20px;top:42px;width:4px;height:1px;background:repeating-linear-gradient(90deg,#a0a0a0 0 1px,transparent 1px 2px);"></div>
<div class="t" style="left:26px;top:34.0px;line-height:16px;font-size:11px;letter-spacing:-0.2px;">Dialogue Package</div>
<div class="a" style="left:34px;top:58px;width:9px;height:1px;background:repeating-linear-gradient(90deg,#a0a0a0 0 1px,transparent 1px 2px);"></div>
<div class="t" style="left:45px;top:50.0px;line-height:16px;font-size:11px;letter-spacing:-0.2px;">Dialogue</div>
<div class="a" style="left:34px;top:74px;width:9px;height:1px;background:repeating-linear-gradient(90deg,#a0a0a0 0 1px,transparent 1px 2px);"></div>
<div class="t" style="left:45px;top:66.0px;line-height:16px;font-size:11px;letter-spacing:-0.2px;">Diplomatic Assaults</div>
<div class="a" style="left:34px;top:90px;width:9px;height:1px;background:repeating-linear-gradient(90deg,#a0a0a0 0 1px,transparent 1px 2px);"></div>
<div class="a" style="left:43px;top:82px;width:65px;height:16px;background:#eeeeee;"></div>
<div class="t" style="left:45px;top:82.0px;line-height:16px;font-size:11px;letter-spacing:-0.2px;">Word Swaps</div>
<div class="a" style="left:34px;top:106px;width:9px;height:1px;background:repeating-linear-gradient(90deg,#a0a0a0 0 1px,transparent 1px 2px);"></div>
<div class="t" style="left:45px;top:98.0px;line-height:16px;font-size:11px;letter-spacing:-0.2px;">_lines</div>
<div class="a" style="left:10px;top:118px;width:9px;height:9px;border:1px solid #919191;background:linear-gradient(#fff,#dedede);"></div>
<div class="a" style="left:12px;top:122px;width:5px;height:1px;background:#1f3c88;"></div>
<div class="a" style="left:14px;top:120px;width:1px;height:5px;background:#1f3c88;"></div>
<div class="a" style="left:20px;top:122px;width:4px;height:1px;background:repeating-linear-gradient(90deg,#a0a0a0 0 1px,transparent 1px 2px);"></div>
<div class="t" style="left:26px;top:114.0px;line-height:16px;font-size:11px;letter-spacing:-0.2px;">Races</div>
<div class="a" style="left:10px;top:134px;width:9px;height:9px;border:1px solid #919191;background:linear-gradient(#fff,#dedede);"></div>
<div class="a" style="left:12px;top:138px;width:5px;height:1px;background:#1f3c88;"></div>
<div class="a" style="left:14px;top:136px;width:1px;height:5px;background:#1f3c88;"></div>
<div class="a" style="left:20px;top:138px;width:4px;height:1px;background:repeating-linear-gradient(90deg,#a0a0a0 0 1px,transparent 1px 2px);"></div>
<div class="t" style="left:26px;top:130.0px;line-height:16px;font-size:11px;letter-spacing:-0.2px;">Characters</div>
<div class="a" style="left:10px;top:150px;width:9px;height:9px;border:1px solid #919191;background:linear-gradient(#fff,#dedede);"></div>
<div class="a" style="left:12px;top:154px;width:5px;height:1px;background:#1f3c88;"></div>
<div class="a" style="left:14px;top:152px;width:1px;height:5px;background:#1f3c88;"></div>
<div class="a" style="left:20px;top:154px;width:4px;height:1px;background:repeating-linear-gradient(90deg,#a0a0a0 0 1px,transparent 1px 2px);"></div>
<div class="t" style="left:26px;top:146.0px;line-height:16px;font-size:11px;letter-spacing:-0.2px;">Faction</div>
<div class="a" style="left:15px;top:170px;width:9px;height:1px;background:repeating-linear-gradient(90deg,#a0a0a0 0 1px,transparent 1px 2px);"></div>
<div class="t" style="left:26px;top:162.0px;line-height:16px;font-size:11px;letter-spacing:-0.2px;">Towns</div>
<div class="a" style="left:15px;top:186px;width:9px;height:1px;background:repeating-linear-gradient(90deg,#a0a0a0 0 1px,transparent 1px 2px);"></div>
<div class="t" style="left:26px;top:178.0px;line-height:16px;font-size:11px;letter-spacing:-0.2px;">Locational Damage</div>
<div class="a" style="left:15px;top:202px;width:9px;height:1px;background:repeating-linear-gradient(90deg,#a0a0a0 0 1px,transparent 1px 2px);"></div>
<div class="t" style="left:26px;top:194.0px;line-height:16px;font-size:11px;letter-spacing:-0.2px;">Combat Techniques</div>
<div class="a" style="left:10px;top:214px;width:9px;height:9px;border:1px solid #919191;background:linear-gradient(#fff,#dedede);"></div>
<div class="a" style="left:12px;top:218px;width:5px;height:1px;background:#1f3c88;"></div>
<div class="a" style="left:14px;top:216px;width:1px;height:5px;background:#1f3c88;"></div>
<div class="a" style="left:20px;top:218px;width:4px;height:1px;background:repeating-linear-gradient(90deg,#a0a0a0 0 1px,transparent 1px 2px);"></div>
<div class="t" style="left:26px;top:210.0px;line-height:16px;font-size:11px;letter-spacing:-0.2px;">Biomes</div>
<div class="a" style="left:10px;top:230px;width:9px;height:9px;border:1px solid #919191;background:linear-gradient(#fff,#dedede);"></div>
<div class="a" style="left:12px;top:234px;width:5px;height:1px;background:#1f3c88;"></div>
<div class="a" style="left:14px;top:232px;width:1px;height:5px;background:#1f3c88;"></div>
<div class="a" style="left:20px;top:234px;width:4px;height:1px;background:repeating-linear-gradient(90deg,#a0a0a0 0 1px,transparent 1px 2px);"></div>
<div class="t" style="left:26px;top:226.0px;line-height:16px;font-size:11px;letter-spacing:-0.2px;">AI Packages</div>
<div class="a" style="left:15px;top:250px;width:9px;height:1px;background:repeating-linear-gradient(90deg,#a0a0a0 0 1px,transparent 1px 2px);"></div>
<div class="t" style="left:26px;top:242.0px;line-height:16px;font-size:11px;letter-spacing:-0.2px;">Vendor Lists</div>
<div class="a" style="left:15px;top:266px;width:9px;height:1px;background:repeating-linear-gradient(90deg,#a0a0a0 0 1px,transparent 1px 2px);"></div>
<div class="t" style="left:26px;top:258.0px;line-height:16px;font-size:11px;letter-spacing:-0.2px;">Colour Scheme</div>
<div class="a" style="left:15px;top:282px;width:9px;height:1px;background:repeating-linear-gradient(90deg,#a0a0a0 0 1px,transparent 1px 2px);"></div>
<div class="t" style="left:26px;top:274.0px;line-height:16px;font-size:11px;letter-spacing:-0.2px;">Research</div>
<div class="a" style="left:15px;top:298px;width:9px;height:1px;background:repeating-linear-gradient(90deg,#a0a0a0 0 1px,transparent 1px 2px);"></div>
<div class="t" style="left:26px;top:290.0px;line-height:16px;font-size:11px;letter-spacing:-0.2px;">Game Starts</div>
<div class="a" style="left:10px;top:310px;width:9px;height:9px;border:1px solid #919191;background:linear-gradient(#fff,#dedede);"></div>
<div class="a" style="left:12px;top:314px;width:5px;height:1px;background:#1f3c88;"></div>
<div class="a" style="left:14px;top:312px;width:1px;height:5px;background:#1f3c88;"></div>
<div class="a" style="left:20px;top:314px;width:4px;height:1px;background:repeating-linear-gradient(90deg,#a0a0a0 0 1px,transparent 1px 2px);"></div>
<div class="t" style="left:26px;top:306.0px;line-height:16px;font-size:11px;letter-spacing:-0.2px;">Effects</div>
<div class="a" style="left:190px;top:0px;width:316px;height:601px;background:#fff;border:1px solid #828790;"></div>
<div class="t" style="left:198px;top:5.5px;line-height:16px;font-size:11px;letter-spacing:-0.2px;">Name</div>
<div class="t" style="left:198px;top:26.5px;line-height:16px;font-size:11px;letter-spacing:-0.2px;">TERRIFYING</div>
<div class="t" style="left:198px;top:43.5px;line-height:16px;font-size:11px;letter-spacing:-0.2px;">TERRORIST</div>
<div class="t" style="left:198px;top:60.5px;line-height:16px;font-size:11px;letter-spacing:-0.2px;">THESETHOSE</div>
<div class="t" style="left:198px;top:77.5px;line-height:16px;font-size:11px;letter-spacing:-0.2px;">THISGUY</div>
<div class="t" style="left:198px;top:94.5px;line-height:16px;font-size:11px;letter-spacing:-0.2px;">THISPLACE</div>
<div class="t" style="left:198px;top:111.5px;line-height:16px;font-size:11px;letter-spacing:-0.2px;">THISTHAT</div>
<div class="t" style="left:198px;top:128.5px;line-height:16px;font-size:11px;letter-spacing:-0.2px;">THREAT</div>
<div class="t" style="left:198px;top:145.5px;line-height:16px;font-size:11px;letter-spacing:-0.2px;">THREAT_ACTION</div>
<div class="t" style="left:198px;top:162.5px;line-height:16px;font-size:11px;letter-spacing:-0.2px;">THREAT_TOOL</div>
<div class="t" style="left:198px;top:179.5px;line-height:16px;font-size:11px;letter-spacing:-0.2px;">TINCAN</div>
<div class="t" style="left:198px;top:196.5px;line-height:16px;font-size:11px;letter-spacing:-0.2px;">TRASH</div>
<div class="t" style="left:198px;top:213.5px;line-height:16px;font-size:11px;letter-spacing:-0.2px;">TRAVELLER</div>
<div class="t" style="left:198px;top:230.5px;line-height:16px;font-size:11px;letter-spacing:-0.2px;">TURF</div>
<div class="t" style="left:198px;top:247.5px;line-height:16px;font-size:11px;letter-spacing:-0.2px;">WAIT</div>
<div class="t" style="left:198px;top:264.5px;line-height:16px;font-size:11px;letter-spacing:-0.2px;">WAR</div>
<div class="t" style="left:198px;top:281.5px;line-height:16px;font-size:11px;letter-spacing:-0.2px;">WEMADE</div>
<div class="t" style="left:198px;top:298.5px;line-height:16px;font-size:11px;letter-spacing:-0.2px;">WHATS</div>
<div class="t" style="left:198px;top:315.5px;line-height:16px;font-size:11px;letter-spacing:-0.2px;">WHATEVER</div>
<div class="t" style="left:198px;top:332.5px;line-height:16px;font-size:11px;letter-spacing:-0.2px;">WHO</div>
<div class="t" style="left:198px;top:349.5px;line-height:16px;font-size:11px;letter-spacing:-0.2px;">WIFE</div>
<div class="t" style="left:198px;top:366.5px;line-height:16px;font-size:11px;letter-spacing:-0.2px;">WITCH</div>
<div class="t" style="left:198px;top:383.5px;line-height:16px;font-size:11px;letter-spacing:-0.2px;">WOLVES</div>
<div class="t" style="left:198px;top:400.5px;line-height:16px;font-size:11px;letter-spacing:-0.2px;">WOOT</div>
<div class="t" style="left:198px;top:417.5px;line-height:16px;font-size:11px;letter-spacing:-0.2px;">WORD</div>
<div class="t" style="left:198px;top:434.5px;line-height:16px;font-size:11px;letter-spacing:-0.2px;">WOW</div>
<div class="t" style="left:198px;top:451.5px;line-height:16px;font-size:11px;letter-spacing:-0.2px;">WREE</div>
<div class="t" style="left:198px;top:468.5px;line-height:16px;font-size:11px;letter-spacing:-0.2px;">WTF</div>
<div class="t" style="left:198px;top:485.5px;line-height:16px;font-size:11px;letter-spacing:-0.2px;">YAKNOW</div>
<div class="t" style="left:198px;top:502.5px;line-height:16px;font-size:11px;letter-spacing:-0.2px;">YOU</div>
<div class="t" style="left:198px;top:519.5px;line-height:16px;font-size:11px;letter-spacing:-0.2px;">YOUR</div>
<div class="t" style="left:198px;top:536.5px;line-height:16px;font-size:11px;letter-spacing:-0.2px;">YOUTH</div>
<div class="t" style="left:198px;top:553.5px;line-height:16px;font-size:11px;letter-spacing:-0.2px;">YUCK</div>
<div class="a" style="left:488px;top:1px;width:17px;height:582px;background:#f0f0f0;"></div>
<svg class="a" style="left:492px;top:8px;" width="9" height="6" viewBox="0 0 9 6"><polyline points="1.2,5.2 4.5,1.9 7.8,5.2" fill="none" stroke="#555" stroke-width="2.1"/></svg>
<div class="a" style="left:191px;top:583px;width:297px;height:16px;background:#f0f0f0;"></div>
<svg class="a" style="left:197px;top:587px;" width="6" height="9" viewBox="0 0 6 9"><polyline points="5.2,1.2 1.9,4.5 5.2,7.8" fill="none" stroke="#555" stroke-width="2.1"/></svg>
<div class="a" style="left:209px;top:583px;width:201px;height:16px;background:#cdcdcd;"></div>
<div class="a" style="left:190px;top:602px;width:316px;height:20px;background:#fff;border:1px solid #7a7a7a;"></div>
</div>
<div class="a" style="left:236px;top:284px;width:1406px;height:663px;background:#b9d1ea;border:1px solid #000000;border-radius:5px 5px 0 0;box-shadow:inset 1px 1px 0 #fff,inset -1px -1px 0 #aee4f6;"></div>
<div class="a" style="left:238px;top:285px;width:1402px;height:30px;background:linear-gradient(#99b4d1,#b9d1ea);border-radius:4px 4px 0 0;border-top:1px solid rgba(255,255,255,.6);"></div>
<div class="a" style="left:244px;top:315px;width:1390px;height:624px;background:#f0f0f0;"></div>
<div class="a" style="left:1532px;top:294px;width:32px;height:18px;background:linear-gradient(#d3e0f0 0,#c3d4ea 45%,#a5bbd8 50%,#b5cbe6 100%);border:1px solid #5a7194;border-radius:3px;box-shadow:inset 0 0 0 1px rgba(255,255,255,.45);"></div>
<svg class="a" style="left:1541px;top:302px;" width="12" height="6" viewBox="0 0 12 6"><rect x="1.5" y="0.5" width="10" height="4" rx="1" fill="#f4f4f4" stroke="#2b2b2b" stroke-width="1"/></svg>
<div class="a" style="left:1566px;top:294px;width:32px;height:18px;background:linear-gradient(#d3e0f0 0,#c3d4ea 45%,#a5bbd8 50%,#b5cbe6 100%);border:1px solid #5a7194;border-radius:3px;box-shadow:inset 0 0 0 1px rgba(255,255,255,.45);"></div>
<svg class="a" style="left:1576px;top:297px;" width="12" height="11" viewBox="0 0 12 11"><rect x="1.5" y="1.5" width="9" height="8" fill="#f4f4f4" stroke="#2b2b2b" stroke-width="1"/><rect x="3.5" y="4.5" width="5" height="2" fill="#f4f4f4" stroke="#2b2b2b" stroke-width="1"/></svg>
<div class="a" style="left:1600px;top:294px;width:32px;height:18px;background:linear-gradient(#eab0a3 0,#e19a8a 45%,#c4442b 50%,#d67662 100%);border:1px solid #4a1515;border-radius:3px;box-shadow:inset 0 0 0 1px rgba(255,255,255,.45);"></div>
<svg class="a" style="left:1609px;top:297px;" width="14" height="12" viewBox="0 0 14 12"><path d="M3.8,3.2 L10.2,8.8 M10.2,3.2 L3.8,8.8" stroke="#333" stroke-width="4" stroke-linecap="square"/><path d="M3.8,3.2 L10.2,8.8 M10.2,3.2 L3.8,8.8" stroke="#f6f6f6" stroke-width="2" stroke-linecap="square"/></svg>
<div class="t" style="left:266px;top:294.0px;line-height:18px;font-size:11.6px;">Word Swapper</div>
<div class="a" style="left:246px;top:295px;width:16px;height:16px;background:#3b3735;"></div>
<svg class="a" style="left:246px;top:295px;" width="16" height="16" viewBox="0 0 16 16"><circle cx="8" cy="2.6" r="1.2" fill="#e6e6e6"/><path d="M3.2,5.6 H13.6" stroke="#e6e6e6" stroke-width="1.6"/><path d="M8.2,6 L12.6,13.4" stroke="#e6e6e6" stroke-width="1.8"/><path d="M8.2,6.5 C7.4,8.5 6.6,9 6.2,10.8 L4.6,13.4" stroke="#e6e6e6" stroke-width="1.7" fill="none"/></svg>
<div class="a" style="left:244px;top:315px;width:1390px;height:624px;overflow:hidden;">
<div class="t" style="left:14px;top:9.0px;line-height:16px;font-size:11px;letter-spacing:-0.2px;">Name</div>
<div class="a" style="left:55px;top:7px;width:250px;height:20px;background:#fff;border:1px solid #7a7a7a;"></div>
<div class="t" style="left:58px;top:9.0px;line-height:16px;font-size:11px;letter-spacing:-0.2px;">WREE</div>
<div class="a" style="left:21px;top:36px;width:13px;height:13px;background:#fff;border:1px solid #333;"></div>
<div class="t" style="left:39px;top:34.5px;line-height:16px;font-size:11px;letter-spacing:-0.2px;">Can talk to enemy</div>
<div class="a" style="left:141px;top:36px;width:13px;height:13px;background:#fff;border:1px solid #333;"></div>
<div class="t" style="left:159px;top:34.5px;line-height:16px;font-size:11px;letter-spacing:-0.2px;">Run once only</div>
<div class="a" style="left:162px;top:154px;width:118px;height:21px;background:#cccccc;border:1px solid #bfbfbf;"></div>
<div class="t" style="left:162px;top:156.5px;width:118px;text-align:center;line-height:16px;font-size:11px;color:#838383;letter-spacing:-0.2px;">Add Interjection</div>
<div class="a" style="left:10px;top:183px;width:60px;height:19px;background:#e1e1e1;border:1px solid #adadad;"></div>
<div class="t" style="left:10px;top:184.5px;width:60px;text-align:center;line-height:16px;font-size:11px;letter-spacing:-0.2px;">Add Root</div>
<div class="a" style="left:78px;top:183px;width:61px;height:19px;background:#cccccc;border:1px solid #bfbfbf;"></div>
<div class="t" style="left:78px;top:184.5px;width:61px;text-align:center;line-height:16px;font-size:11px;color:#838383;letter-spacing:-0.2px;">Add Child</div>
<div class="a" style="left:162px;top:183px;width:118px;height:19px;background:#cccccc;border:1px solid #bfbfbf;"></div>
<div class="t" style="left:162px;top:184.5px;width:118px;text-align:center;line-height:16px;font-size:11px;color:#838383;letter-spacing:-0.2px;">Add Descision</div>
<div class="a" style="left:308px;top:11px;width:394px;height:202px;border:1px solid #dcdcdc;"></div>
<div class="t" style="left:314px;top:4px;line-height:16px;padding:0 2px;background:#f0f0f0;letter-spacing:-0.2px;">Conditions</div>
<div class="a" style="left:313px;top:19px;width:86px;height:21px;background:#fff;border:1px solid #7a7a7a;"></div>
<svg class="a" style="left:385px;top:27px;" width="8" height="5" viewBox="0 0 8 5"><polyline points="0.5,0.5 4,4 7.5,0.5" fill="none" stroke="#404040" stroke-width="1.1"/></svg>
<div class="t" style="left:316px;top:20.5px;line-height:16px;font-size:11px;letter-spacing:-0.2px;">T_ME</div>
<div class="a" style="left:405px;top:19px;width:173px;height:21px;background:#fff;border:1px solid #7a7a7a;"></div>
<svg class="a" style="left:564px;top:27px;" width="8" height="5" viewBox="0 0 8 5"><polyline points="0.5,0.5 4,4 7.5,0.5" fill="none" stroke="#404040" stroke-width="1.1"/></svg>
<div class="a" style="left:582px;top:18px;width:40px;height:21px;background:#fff;border:1px solid #7a7a7a;"></div>
<svg class="a" style="left:608px;top:27px;" width="8" height="5" viewBox="0 0 8 5"><polyline points="0.5,0.5 4,4 7.5,0.5" fill="none" stroke="#404040" stroke-width="1.1"/></svg>
<div class="a" style="left:625px;top:19px;width:75px;height:20px;background:#fff;border:1px solid #abadb3;"></div>
<div class="a" style="left:683px;top:21px;width:15px;height:8px;background:#f0f0f0;border:1px solid #e3e3e3;"></div>
<div class="a" style="left:683px;top:29px;width:15px;height:8px;background:#f0f0f0;border:1px solid #e3e3e3;"></div>
<svg class="a" style="left:687px;top:23px;" width="7" height="4" viewBox="0 0 7 4"><polygon points="3.5,0 7,4 0,4" fill="#222"/></svg>
<svg class="a" style="left:687px;top:31px;" width="7" height="4" viewBox="0 0 7 4"><polygon points="0,0 7,0 3.5,4" fill="#222"/></svg>
<div class="t" style="left:628px;top:19.5px;line-height:16px;font-size:11px;letter-spacing:-0.2px;">0</div>
<div class="a" style="left:333px;top:45px;width:51px;height:20px;background:#f0f0f0;border:1px solid #cccccc;box-shadow:inset 0 0 0 1px #fff;"></div>
<div class="a" style="left:390px;top:46px;width:143px;height:20px;background:#f0f0f0;border:1px solid #cccccc;box-shadow:inset 0 0 0 1px #fff;"></div>
<svg class="a" style="left:519px;top:54px;" width="8" height="5" viewBox="0 0 8 5"><polyline points="0.5,0.5 4,4 7.5,0.5" fill="none" stroke="#bfbfbf" stroke-width="1.1"/></svg>
<div class="a" style="left:540px;top:46px;width:73px;height:21px;background:#e1e1e1;border:1px solid #adadad;"></div>
<div class="t" style="left:540px;top:48.5px;width:73px;text-align:center;line-height:16px;font-size:11px;letter-spacing:-0.2px;">Add</div>
<div class="a" style="left:621px;top:46px;width:73px;height:21px;background:#e1e1e1;border:1px solid #adadad;"></div>
<div class="t" style="left:621px;top:48.5px;width:73px;text-align:center;line-height:16px;font-size:11px;letter-spacing:-0.2px;">Remove</div>
<div class="a" style="left:313px;top:73px;width:387px;height:135px;background:#fff;border:1px solid #828790;"></div>
<div class="t" style="left:321px;top:79.0px;line-height:16px;font-size:11px;letter-spacing:-0.2px;">Who</div>
<div class="t" style="left:369px;top:79.0px;line-height:16px;font-size:11px;letter-spacing:-0.2px;">Condition</div>
<div class="t" style="left:525px;top:79.0px;line-height:16px;font-size:11px;letter-spacing:-0.2px;">==</div>
<div class="t" style="left:556px;top:79.0px;line-height:16px;font-size:11px;letter-spacing:-0.2px;">Value</div>
<div class="t" style="left:608px;top:79.0px;line-height:16px;font-size:11px;letter-spacing:-0.2px;">Tag</div>
<div class="a" style="left:363px;top:75px;width:1px;height:23px;background:#e5e5e5;"></div>
<div class="a" style="left:364px;top:98px;width:1px;height:109px;background:#f0f0f0;"></div>
<div class="a" style="left:519px;top:75px;width:1px;height:23px;background:#e5e5e5;"></div>
<div class="a" style="left:520px;top:98px;width:1px;height:109px;background:#f0f0f0;"></div>
<div class="a" style="left:550px;top:75px;width:1px;height:23px;background:#e5e5e5;"></div>
<div class="a" style="left:551px;top:98px;width:1px;height:109px;background:#f0f0f0;"></div>
<div class="a" style="left:602px;top:75px;width:1px;height:23px;background:#e5e5e5;"></div>
<div class="a" style="left:603px;top:98px;width:1px;height:109px;background:#f0f0f0;"></div>
<div class="a" style="left:314px;top:115px;width:385px;height:1px;background:#f0f0f0;"></div>
<div class="a" style="left:314px;top:132px;width:385px;height:1px;background:#f0f0f0;"></div>
<div class="a" style="left:314px;top:149px;width:385px;height:1px;background:#f0f0f0;"></div>
<div class="a" style="left:314px;top:166px;width:385px;height:1px;background:#f0f0f0;"></div>
<div class="a" style="left:314px;top:183px;width:385px;height:1px;background:#f0f0f0;"></div>
<div class="a" style="left:314px;top:200px;width:385px;height:1px;background:#f0f0f0;"></div>
<div class="a" style="left:709px;top:13px;width:210px;height:201px;border:1px solid #dcdcdc;"></div>
<div class="t" style="left:715px;top:6px;line-height:16px;padding:0 2px;background:#f0f0f0;letter-spacing:-0.2px;">Personality</div>
<div class="a" style="left:925px;top:9px;width:231px;height:203px;border:1px solid #dcdcdc;"></div>
<div class="t" style="left:931px;top:2px;line-height:16px;padding:0 2px;background:#f0f0f0;letter-spacing:-0.2px;">Effects</div>
<div class="a" style="left:930px;top:20px;width:140px;height:21px;background:#fff;border:1px solid #7a7a7a;"></div>
<svg class="a" style="left:1056px;top:29px;" width="8" height="5" viewBox="0 0 8 5"><polyline points="0.5,0.5 4,4 7.5,0.5" fill="none" stroke="#404040" stroke-width="1.1"/></svg>
<div class="a" style="left:1075px;top:20px;width:66px;height:20px;background:#fff;border:1px solid #abadb3;"></div>
<div class="a" style="left:1124px;top:22px;width:15px;height:8px;background:#f0f0f0;border:1px solid #e3e3e3;"></div>
<div class="a" style="left:1124px;top:30px;width:15px;height:8px;background:#f0f0f0;border:1px solid #e3e3e3;"></div>
<svg class="a" style="left:1128px;top:24px;" width="7" height="4" viewBox="0 0 7 4"><polygon points="3.5,0 7,4 0,4" fill="#222"/></svg>
<svg class="a" style="left:1128px;top:32px;" width="7" height="4" viewBox="0 0 7 4"><polygon points="0,0 7,0 3.5,4" fill="#222"/></svg>
<div class="t" style="left:1078px;top:20.5px;line-height:16px;font-size:11px;letter-spacing:-0.2px;">0</div>
<div class="a" style="left:930px;top:46px;width:225px;height:132px;background:#fff;border:1px solid #828790;"></div>
<div class="t" style="left:938px;top:52.0px;line-height:16px;font-size:11px;letter-spacing:-0.2px;">Effects</div>
<div class="t" style="left:1095px;top:52.0px;line-height:16px;font-size:11px;letter-spacing:-0.2px;">Value</div>
<div class="a" style="left:1090px;top:49px;width:1px;height:23px;background:#e5e5e5;"></div>
<div class="a" style="left:1091px;top:72px;width:1px;height:105px;background:#f0f0f0;"></div>
<div class="a" style="left:1145px;top:49px;width:1px;height:23px;background:#e5e5e5;"></div>
<div class="a" style="left:1146px;top:72px;width:1px;height:105px;background:#f0f0f0;"></div>
<div class="a" style="left:931px;top:88px;width:223px;height:1px;background:#f0f0f0;"></div>
<div class="a" style="left:931px;top:105px;width:223px;height:1px;background:#f0f0f0;"></div>
<div class="a" style="left:931px;top:122px;width:223px;height:1px;background:#f0f0f0;"></div>
<div class="a" style="left:931px;top:139px;width:223px;height:1px;background:#f0f0f0;"></div>
<div class="a" style="left:931px;top:156px;width:223px;height:1px;background:#f0f0f0;"></div>
<div class="a" style="left:931px;top:173px;width:223px;height:1px;background:#f0f0f0;"></div>
<div class="a" style="left:1034px;top:185px;width:54px;height:18px;background:#e1e1e1;border:1px solid #adadad;"></div>
<div class="t" style="left:1034px;top:186.0px;width:54px;text-align:center;line-height:16px;font-size:11px;letter-spacing:-0.2px;">Add</div>
<div class="a" style="left:1095px;top:185px;width:54px;height:18px;background:#e1e1e1;border:1px solid #adadad;"></div>
<div class="t" style="left:1095px;top:186.0px;width:54px;text-align:center;line-height:16px;font-size:11px;letter-spacing:-0.2px;">Remove</div>
<div class="a" style="left:1188px;top:16px;width:121px;height:21px;background:#fff;border:1px solid #7a7a7a;"></div>
<svg class="a" style="left:1295px;top:25px;" width="8" height="5" viewBox="0 0 8 5"><polyline points="0.5,0.5 4,4 7.5,0.5" fill="none" stroke="#404040" stroke-width="1.1"/></svg>
<div class="t" style="left:1191px;top:17.5px;line-height:16px;font-size:11px;letter-spacing:-0.2px;">AI contract</div>
<div class="a" style="left:1316px;top:17px;width:54px;height:17px;background:#e1e1e1;border:1px solid #adadad;"></div>
<div class="t" style="left:1316px;top:17.5px;width:54px;text-align:center;line-height:16px;font-size:11px;letter-spacing:-0.2px;">Add</div>
<div class="a" style="left:1162px;top:43px;width:218px;height:129px;background:#fff;"></div>
<div class="t" style="left:1168px;top:174.5px;line-height:16px;font-size:11.5px;font-weight:bold;">AI contract</div>
<div class="t" style="left:1176px;top:188.0px;line-height:16px;font-size:11px;letter-spacing:-0.15px;">activates the given AI package as a</div>
<div class="t" style="left:1176px;top:201.0px;line-height:16px;font-size:11px;letter-spacing:-0.15px;">contract job, val0 is the number of hours it</div>
<div class="a" style="left:0px;top:219px;width:939px;height:405px;background:#fff;border:1px solid #828790;"></div>
<div class="a" style="left:14px;top:229px;width:9px;height:1px;background:repeating-linear-gradient(90deg,#a0a0a0 0 1px,transparent 1px 2px);"></div>
<div class="a" style="left:24px;top:221px;width:63px;height:16px;background:#3399ff;border:1px dotted #000;"></div>
<div class="t" style="left:26px;top:221.5px;line-height:16px;font-size:11px;color:#fff;letter-spacing:-0.35px;">[9] WRREEE</div>
<div class="a" style="left:943px;top:219px;width:431px;height:318px;background:#fff;"></div>
<div class="a" style="left:943px;top:219px;width:431px;height:16px;background:#f0f0f0;"></div>
<div class="a" style="left:943px;top:219px;width:431px;height:1px;background:#e3e3e3;"></div>
<svg class="a" style="left:947px;top:225px;" width="5" height="5" viewBox="0 0 5 5"><polygon points="5,0 5,5 0,5" fill="#111"/></svg>
<div class="t" style="left:961px;top:218.5px;line-height:16px;font-size:11.5px;font-weight:bold;">main</div>
<div class="a" style="left:943px;top:235px;width:12px;height:16px;background:#f0f0f0;"></div>
<div class="a" style="left:955px;top:235px;width:419px;height:1px;background:#ececec;"></div>
<div class="a" style="left:1054px;top:235px;width:1px;height:16px;background:#ececec;"></div>
<div class="t" style="left:957px;top:234.5px;line-height:16px;font-size:11px;letter-spacing:-0.2px;">chance permanent</div>
<div class="t" style="left:1056px;top:234.5px;line-height:16px;font-size:11px;letter-spacing:-0.2px;">100</div>
<div class="a" style="left:943px;top:251px;width:12px;height:16px;background:#f0f0f0;"></div>
<div class="a" style="left:955px;top:251px;width:419px;height:1px;background:#ececec;"></div>
<div class="a" style="left:1054px;top:251px;width:1px;height:16px;background:#ececec;"></div>
<div class="t" style="left:957px;top:250.5px;line-height:16px;font-size:11px;letter-spacing:-0.2px;">chance temporary</div>
<div class="t" style="left:1056px;top:250.5px;line-height:16px;font-size:11px;letter-spacing:-0.2px;">100</div>
<div class="a" style="left:943px;top:267px;width:12px;height:16px;background:#f0f0f0;"></div>
<div class="a" style="left:955px;top:267px;width:419px;height:1px;background:#ececec;"></div>
<div class="a" style="left:1054px;top:267px;width:1px;height:16px;background:#ececec;"></div>
<div class="t" style="left:957px;top:266.5px;line-height:16px;font-size:11px;letter-spacing:-0.2px;">repetition limit</div>
<div class="t" style="left:1056px;top:266.5px;line-height:16px;font-size:11px;letter-spacing:-0.2px;">DR_NO_LIMIT</div>
<div class="a" style="left:943px;top:283px;width:12px;height:16px;background:#f0f0f0;"></div>
<div class="a" style="left:955px;top:283px;width:419px;height:1px;background:#ececec;"></div>
<div class="a" style="left:1054px;top:283px;width:1px;height:16px;background:#ececec;"></div>
<div class="t" style="left:957px;top:282.5px;line-height:16px;font-size:11px;letter-spacing:-0.2px;">speaker</div>
<div class="t" style="left:1056px;top:282.5px;line-height:16px;font-size:11px;letter-spacing:-0.2px;">T_ME</div>
<div class="a" style="left:943px;top:299px;width:12px;height:16px;background:#f0f0f0;"></div>
<div class="a" style="left:955px;top:299px;width:419px;height:1px;background:#ececec;"></div>
<div class="a" style="left:1054px;top:299px;width:1px;height:16px;background:#ececec;"></div>
<div class="t" style="left:957px;top:298.5px;line-height:16px;font-size:11px;letter-spacing:-0.2px;">target is type</div>
<div class="t" style="left:1056px;top:298.5px;line-height:16px;font-size:11px;letter-spacing:-0.2px;">OT_NONE</div>
<div class="a" style="left:943px;top:315px;width:431px;height:16px;background:#f0f0f0;"></div>
<div class="a" style="left:943px;top:315px;width:431px;height:1px;background:#e3e3e3;"></div>
<svg class="a" style="left:947px;top:321px;" width="5" height="5" viewBox="0 0 5 5"><polygon points="5,0 5,5 0,5" fill="#111"/></svg>
<div class="t" style="left:961px;top:314.5px;line-height:16px;font-size:11.5px;font-weight:bold;">text</div>
<div class="a" style="left:943px;top:331px;width:12px;height:16px;background:#f0f0f0;"></div>
<div class="a" style="left:955px;top:331px;width:419px;height:1px;background:#ececec;"></div>
<div class="a" style="left:1054px;top:331px;width:1px;height:16px;background:#ececec;"></div>
<div class="t" style="left:957px;top:330.5px;line-height:16px;font-size:11px;letter-spacing:-0.2px;">text0</div>
<div class="t" style="left:1056px;top:330.5px;line-height:16px;font-size:11px;letter-spacing:-0.2px;">WRREEE</div>
<div class="a" style="left:943px;top:347px;width:12px;height:16px;background:#f0f0f0;"></div>
<div class="a" style="left:955px;top:347px;width:419px;height:1px;background:#ececec;"></div>
<div class="a" style="left:1054px;top:347px;width:1px;height:16px;background:#ececec;"></div>
<div class="t" style="left:957px;top:346.5px;line-height:16px;font-size:11px;letter-spacing:-0.2px;">text1</div>
<div class="t" style="left:1056px;top:346.5px;line-height:16px;font-size:11px;letter-spacing:-0.2px;">WREEEEE</div>
<div class="a" style="left:943px;top:363px;width:12px;height:16px;background:#f0f0f0;"></div>
<div class="a" style="left:955px;top:363px;width:419px;height:1px;background:#ececec;"></div>
<div class="a" style="left:1054px;top:363px;width:1px;height:16px;background:#ececec;"></div>
<div class="t" style="left:957px;top:362.5px;line-height:16px;font-size:11px;letter-spacing:-0.2px;">text2</div>
<div class="t" style="left:1056px;top:362.5px;line-height:16px;font-size:11px;letter-spacing:-0.2px;">WREEEEEEEEEE</div>
<div class="a" style="left:943px;top:379px;width:12px;height:16px;background:#f0f0f0;"></div>
<div class="a" style="left:955px;top:379px;width:419px;height:1px;background:#ececec;"></div>
<div class="a" style="left:1054px;top:379px;width:1px;height:16px;background:#ececec;"></div>
<div class="t" style="left:957px;top:378.5px;line-height:16px;font-size:11px;letter-spacing:-0.2px;">text3</div>
<div class="t" style="left:1056px;top:378.5px;line-height:16px;font-size:11px;letter-spacing:-0.2px;">WWRREEEEEEEEE</div>
<div class="a" style="left:943px;top:395px;width:12px;height:16px;background:#f0f0f0;"></div>
<div class="a" style="left:955px;top:395px;width:419px;height:1px;background:#ececec;"></div>
<div class="a" style="left:1054px;top:395px;width:1px;height:16px;background:#ececec;"></div>
<div class="t" style="left:957px;top:394.5px;line-height:16px;font-size:11px;letter-spacing:-0.2px;">text4</div>
<div class="t" style="left:1056px;top:394.5px;line-height:16px;font-size:11px;letter-spacing:-0.2px;">WREEE</div>
<div class="a" style="left:943px;top:411px;width:12px;height:16px;background:#f0f0f0;"></div>
<div class="a" style="left:955px;top:411px;width:419px;height:1px;background:#ececec;"></div>
<div class="a" style="left:1054px;top:411px;width:1px;height:16px;background:#ececec;"></div>
<div class="t" style="left:957px;top:410.5px;line-height:16px;font-size:11px;letter-spacing:-0.2px;">text5</div>
<div class="t" style="left:1056px;top:410.5px;line-height:16px;font-size:11px;letter-spacing:-0.2px;">wrreeeeee</div>
<div class="a" style="left:943px;top:427px;width:12px;height:16px;background:#f0f0f0;"></div>
<div class="a" style="left:955px;top:427px;width:419px;height:1px;background:#ececec;"></div>
<div class="a" style="left:1054px;top:427px;width:1px;height:16px;background:#ececec;"></div>
<div class="t" style="left:957px;top:426.5px;line-height:16px;font-size:11px;letter-spacing:-0.2px;">text6</div>
<div class="t" style="left:1056px;top:426.5px;line-height:16px;font-size:11px;letter-spacing:-0.2px;">WWRRREEEEEEE</div>
<div class="a" style="left:943px;top:443px;width:12px;height:16px;background:#f0f0f0;"></div>
<div class="a" style="left:955px;top:443px;width:419px;height:1px;background:#ececec;"></div>
<div class="a" style="left:1054px;top:443px;width:1px;height:16px;background:#ececec;"></div>
<div class="t" style="left:957px;top:442.5px;line-height:16px;font-size:11px;letter-spacing:-0.2px;">text7</div>
<div class="t" style="left:1056px;top:442.5px;line-height:16px;font-size:11px;letter-spacing:-0.2px;">WRRRRREEEEEEEEEE</div>
<div class="a" style="left:943px;top:459px;width:12px;height:16px;background:#f0f0f0;"></div>
<div class="a" style="left:955px;top:459px;width:419px;height:1px;background:#ececec;"></div>
<div class="a" style="left:1054px;top:459px;width:1px;height:16px;background:#ececec;"></div>
<div class="t" style="left:957px;top:458.5px;line-height:16px;font-size:11px;letter-spacing:-0.2px;">text8</div>
<div class="t" style="left:1056px;top:458.5px;line-height:16px;font-size:11px;letter-spacing:-0.2px;">WRRREEEEEEEEE</div>
<div class="a" style="left:943px;top:475px;width:12px;height:16px;background:#f0f0f0;"></div>
<div class="a" style="left:955px;top:475px;width:419px;height:1px;background:#ececec;"></div>
<div class="a" style="left:1054px;top:475px;width:1px;height:16px;background:#ececec;"></div>
<div class="t" style="left:957px;top:474.5px;line-height:16px;font-size:11px;letter-spacing:-0.2px;">text9</div>
<div class="a" style="left:955px;top:491px;width:419px;height:1px;background:#ececec;"></div>
<div class="a" style="left:1374px;top:219px;width:16px;height:318px;background:#f0f0f0;"></div>
<svg class="a" style="left:1377px;top:224px;" width="9" height="6" viewBox="0 0 9 6"><polyline points="1.2,5.2 4.5,1.9 7.8,5.2" fill="none" stroke="#555" stroke-width="2.1"/></svg>
<div class="a" style="left:1374px;top:236px;width:16px;height:271px;background:#cdcdcd;"></div>
<svg class="a" style="left:1377px;top:527px;" width="9" height="6" viewBox="0 0 9 6"><polyline points="1.2,0.8 4.5,4.1 7.8,0.8" fill="none" stroke="#555" stroke-width="2.1"/></svg>
<div class="t" style="left:949px;top:540.0px;line-height:16px;font-size:11.5px;font-weight:bold;">Selected Item</div>
<div class="t" style="left:958px;top:554.0px;line-height:16px;font-size:11px;letter-spacing:-0.2px;">Description</div>
</div>
<div class="a" style="left:0px;top:1040px;width:1920px;height:40px;background:#000;"></div>
<svg class="a" style="left:15px;top:1052px;" width="17" height="17" viewBox="0 0 17 17"><path d="M0,2.4 L7,1.4 V8 H0 Z M8,1.2 L16.5,0 V8 H8 Z M0,9 H7 V15.6 L0,14.6 Z M8,9 H16.5 V17 L8,15.8 Z" fill="#fff"/></svg>
<div class="a" style="left:48px;top:1040px;width:344px;height:40px;background:#333;"></div>
<div class="t" style="left:56px;top:1050.0px;line-height:20px;font-size:14.5px;color:#aaaaaa;">Search Windows</div>
<svg class="a" style="left:405px;top:1052px;" width="22" height="16" viewBox="0 0 22 16"><rect x="4.5" y="1.5" width="13" height="13" fill="none" stroke="#fff" stroke-width="1.4"/><path d="M2.5,3 H1 V13 H2.5 M19.5,3 H21 V13 H19.5" fill="none" stroke="#fff" stroke-width="1.2"/></svg>
<svg class="a" style="left:455px;top:1050px;" width="24" height="20" viewBox="0 0 24 20"><path d="M1,3 H9 L11,5 H22 V18 H1 Z" fill="#f0c54f"/><path d="M1,7 H22 V18 H1 Z" fill="#ffd966"/><path d="M7,12 H16 V18 H13.5 V14.5 H9.5 V18 H7 Z" fill="#1e88e5"/></svg>
<div class="a" style="left:447px;top:1078px;width:40px;height:2px;background:#76d6cf;"></div>
<svg class="a" style="left:505px;top:1049px;" width="22" height="22" viewBox="0 0 22 22"><circle cx="11" cy="11" r="10.5" fill="#db4437"/><path d="M11,11 L20.1,5.75 A10.5,10.5 0 0 1 11,21.5 Z" fill="#f4b400"/><path d="M11,11 L11,21.5 A10.5,10.5 0 0 1 1.9,5.75 Z" fill="#0f9d58"/><circle cx="11" cy="11" r="5" fill="#fff"/><circle cx="11" cy="11" r="3.8" fill="#4285f4"/></svg>
<div class="a" style="left:496px;top:1078px;width:40px;height:2px;background:#76d6cf;"></div>
<svg class="a" style="left:554px;top:1049px;" width="22" height="22" viewBox="0 0 22 22"><circle cx="11" cy="11" r="10.5" fill="#1b3a6b"/><circle cx="14" cy="8" r="3.5" fill="none" stroke="#dfe8f0" stroke-width="1.5"/><path d="M2,14 L9,16" stroke="#dfe8f0" stroke-width="2.5"/><circle cx="9" cy="16" r="2" fill="#dfe8f0"/></svg>
<svg class="a" style="left:602px;top:1048px;" width="24" height="24" viewBox="0 0 24 24"><circle cx="12" cy="12" r="11.5" fill="#1ed760"/><path d="M5.5,8.5 C9.5,7 15,7.5 18.5,9.5 M6.5,12 C10,11 14,11.5 17,13 M7.5,15.3 C10.5,14.5 13.5,15 15.5,16" stroke="#000" stroke-width="1.9" fill="none" stroke-linecap="round"/></svg>
<div class="a" style="left:594px;top:1078px;width:40px;height:2px;background:#76d6cf;"></div>
<svg class="a" style="left:651px;top:1048px;" width="24" height="24" viewBox="0 0 24 24"><path d="M2,2 L22,22 M22,2 L2,22" stroke="#6e6e6e" stroke-width="5"/><rect x="6" y="8" width="12" height="7" fill="#000"/><text x="6" y="14.5" font-size="7.5" font-family="Liberation Sans" font-weight="bold" fill="#ddd">OC</text></svg>
<svg class="a" style="left:700px;top:1048px;" width="24" height="24" viewBox="0 0 24 24"><rect x="9" y="3" width="14" height="18" fill="#fff"/><path d="M11,7 H21 M11,10 H21 M11,13 H21 M11,16 H21" stroke="#2b579a" stroke-width="1.2"/><path d="M0,3 L13,1 V23 L0,21 Z" fill="#2b579a"/><text x="1.5" y="16" font-size="9" font-family="Liberation Sans" font-weight="bold" fill="#fff">W</text></svg>
<svg class="a" style="left:749px;top:1048px;" width="24" height="24" viewBox="0 0 24 24"><path d="M12,1 L23,12 L12,23 L1,12 Z" fill="#17b2e7"/><path d="M12,7 L17,12 L12,17 L7,12 Z" fill="#000"/></svg>
<div class="a" style="left:786px;top:1040px;width:48px;height:40px;background:#333;"></div>
<svg class="a" style="left:799px;top:1049px;" width="22" height="22" viewBox="0 0 22 22"><rect x="0" y="0" width="22" height="22" fill="#3b3735"/><g transform="scale(1.375)"><circle cx="8" cy="2.6" r="1.2" fill="#e6e6e6"/><path d="M3.2,5.6 H13.6" stroke="#e6e6e6" stroke-width="1.6"/><path d="M8.2,6 L12.6,13.4" stroke="#e6e6e6" stroke-width="1.8"/><path d="M8.2,6.5 C7.4,8.5 6.6,9 6.2,10.8 L4.6,13.4" stroke="#e6e6e6" stroke-width="1.7" fill="none"/></g></svg>
<div class="a" style="left:786px;top:1078px;width:48px;height:2px;background:#76d6cf;"></div>
<div class="t" style="left:1625px;top:1052.0px;line-height:16px;font-size:11.6px;color:#fff;">Desktop</div>
<svg class="a" style="left:1676px;top:1047px;" width="9" height="6" viewBox="0 0 9 6"><path d="M0.5,0.5 L3,3 L0.5,5.5 M4.5,0.5 L7,3 L4.5,5.5" stroke="#fff" fill="none" stroke-width="1.1"/></svg>
<svg class="a" style="left:1695px;top:1056px;" width="13" height="8" viewBox="0 0 13 8"><polyline points="0.5,7.5 6.5,1 12.5,7.5" fill="none" stroke="#fff" stroke-width="1.3"/></svg>
<svg class="a" style="left:1717px;top:1053px;" width="17" height="15" viewBox="0 0 17 15"><rect x="3.5" y="1.5" width="12" height="8" fill="none" stroke="#fff"/><rect x="0.5" y="0.5" width="4" height="4" fill="#000" stroke="#fff"/><path d="M9.5,9.5 V13 M5,13.5 H14 M3,4 V13" stroke="#fff"/></svg>
<svg class="a" style="left:1741px;top:1052px;" width="17" height="16" viewBox="0 0 17 16"><path d="M1,5.5 H4 L8,1.5 V14.5 L4,10.5 H1 Z" fill="none" stroke="#fff" stroke-width="1.1"/><path d="M10.5,5.5 C11.5,6.5 11.5,9.5 10.5,10.5 M12.5,3.5 C14.5,6 14.5,10 12.5,12.5 M14.5,1.5 C17,5 17,11 14.5,14.5" stroke="#fff" fill="none" stroke-width="1"/></svg>
<div class="t" style="left:1766px;top:1044.5px;line-height:14px;font-size:11.6px;color:#fff;">ENG</div>
<div class="t" style="left:1766px;top:1062.0px;line-height:14px;font-size:11.6px;color:#fff;">INTL</div>
<div class="t" style="left:1818px;top:1044.5px;line-height:14px;font-size:11.6px;color:#fff;">15:00</div>
<div class="t" style="left:1803px;top:1062.0px;line-height:14px;font-size:11.6px;color:#fff;">23/11/2016</div>
<svg class="a" style="left:1878px;top:1052px;" width="18" height="17" viewBox="0 0 18 17"><path d="M1.5,1.5 H16.5 V13 H10 L8,15.5 L6,13 H1.5 Z" fill="none" stroke="#fff" stroke-width="1.2"/></svg>
<div class="a" style="left:1915px;top:1040px;width:1px;height:40px;background:#6e6e6e;"></div>
</body></html>
